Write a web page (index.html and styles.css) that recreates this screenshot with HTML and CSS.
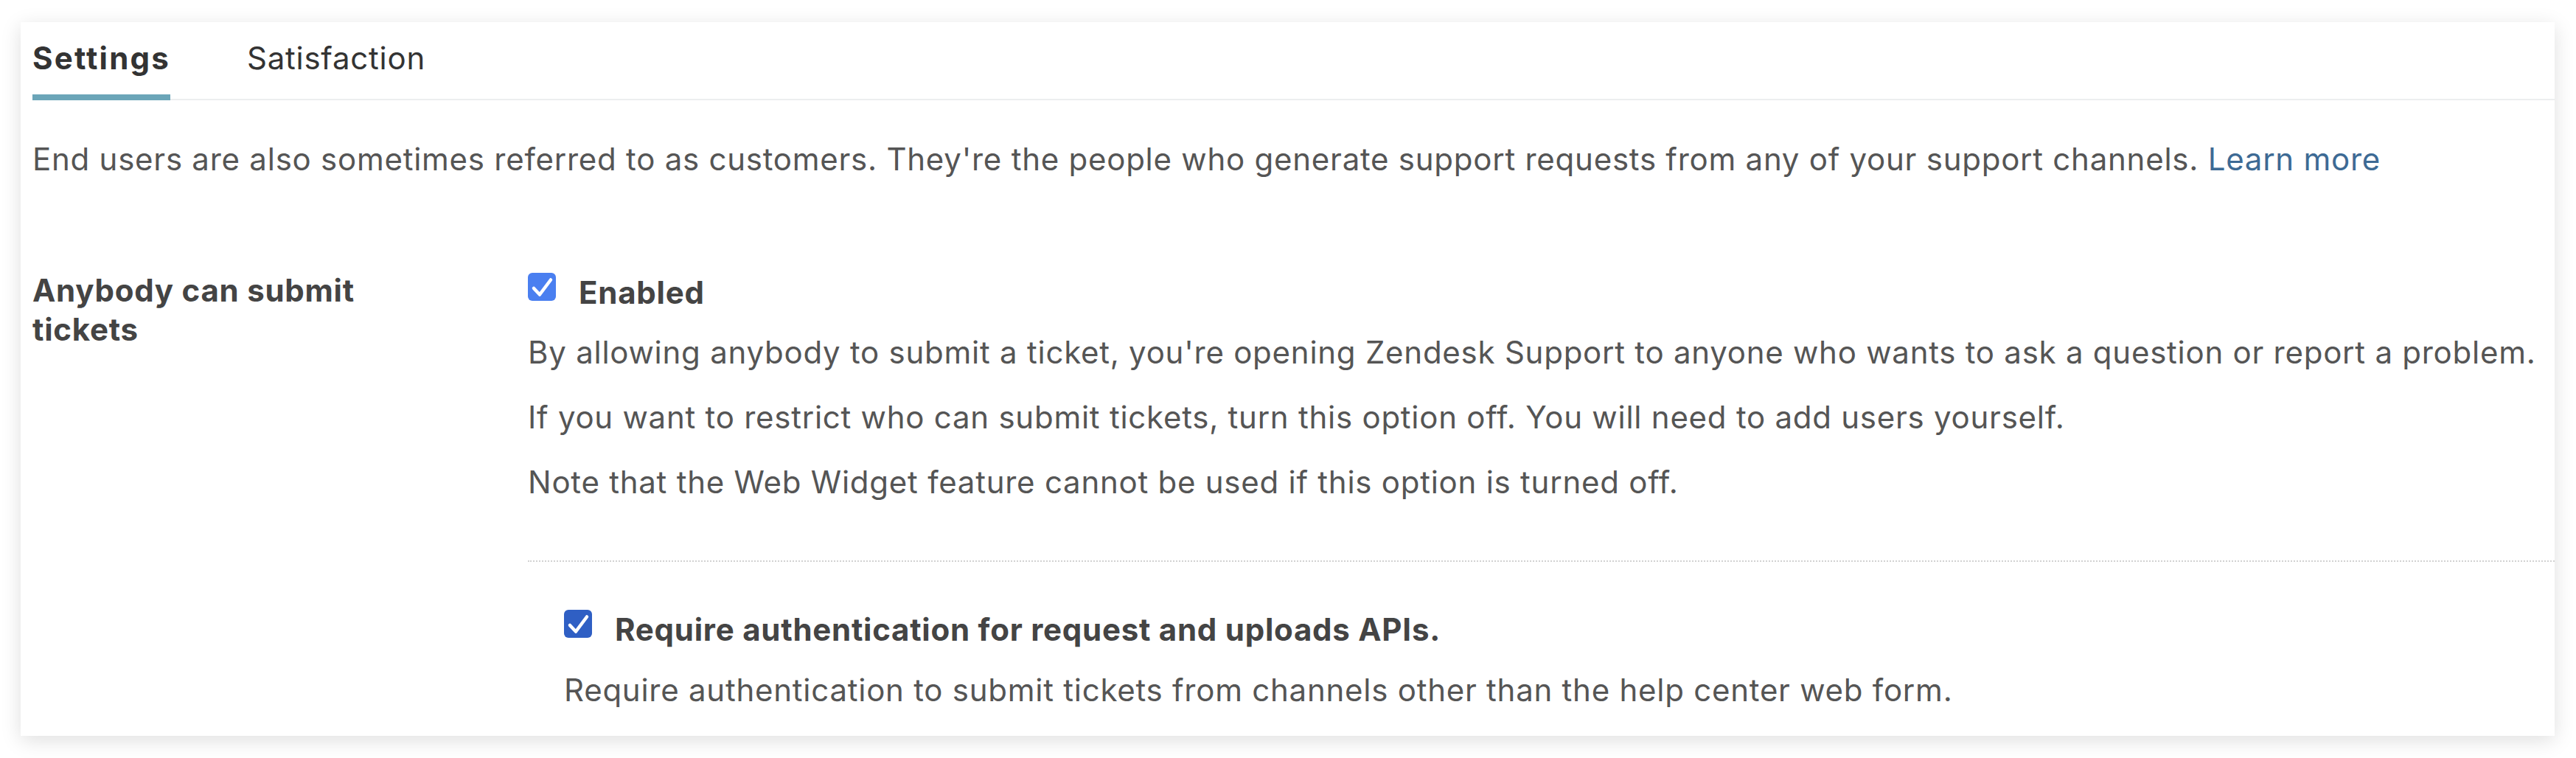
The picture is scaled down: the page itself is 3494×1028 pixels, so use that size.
FILE: index.html
```html
<!DOCTYPE html>
<html lang="en">
<head>
    <meta charset="UTF-8">
    <meta name="viewport" content="width=device-width, initial-scale=1.0">
    <title>End users</title>
    <link rel="stylesheet" href="styles.css">
</head>
<body>
    <div class="panel">
        <div class="tabs">
            <div class="tab active">Settings</div>
            <div class="tab">Satisfaction</div>
        </div>

        <p class="intro">End users are also sometimes referred to as customers. They're the people who generate support requests from any of your support channels. <a href="#">Learn more</a></p>

        <div class="setting">
            <div class="setting-label">Anybody can submit tickets</div>
            <div class="setting-body">
                <label class="check">
                    <span class="box">
                        <svg viewBox="0 0 38 38" width="38" height="38"><polyline points="8,21 16,29.5 31,9.5" fill="none" stroke="#fff" stroke-width="4.5" stroke-linecap="round" stroke-linejoin="round"/></svg>
                    </span>
                    Enabled
                </label>
                <p class="hint">By allowing anybody to submit a ticket, you're opening Zendesk Support to anyone who wants to ask a question or report a problem.</p>
                <p class="hint">If you want to restrict who can submit tickets, turn this option off. You will need to add users yourself.</p>
                <p class="hint">Note that the Web Widget feature cannot be used if this option is turned off.</p>

                <div class="nested">
                    <label class="check">
                        <span class="box dark">
                            <svg viewBox="0 0 38 38" width="38" height="38"><polyline points="8,21 16,29.5 31,9.5" fill="none" stroke="#fff" stroke-width="4.5" stroke-linecap="round" stroke-linejoin="round"/></svg>
                        </span>
                        Require authentication for request and uploads APIs.
                    </label>
                    <p class="hint">Require authentication to submit tickets from channels other than the help center web form.</p>
                </div>
            </div>
        </div>
    </div>
</body>
</html>
```

FILE: styles.css
```css
*{
    box-sizing: border-box;
}
body{
    margin: 0;
    background-color: #fff;
    font-family: Inter, "Liberation Sans", Arial, sans-serif;
    font-size: 42px;
    letter-spacing: 0.75px;
    line-height: 53px;
    color: #555;
}
.panel{
    margin: 30px 29px 30px 28px;
    height: 968px;
    padding: 0 0 0 16px;
    background-color: #fff;
    box-shadow: 0 6px 26px rgba(0, 0, 0, 0.13);
    overflow: hidden;
}
.tabs{
    display: flex;
    gap: 104px;
    padding-top: 22px;
    border-bottom: 2px solid #eceeef;
}
.tab{
    color: #333;
    padding-bottom: 23px;
    border-bottom: 8px solid transparent;
    margin-bottom: -2px;
}
.tab.active{
    font-weight: 700;
    letter-spacing: 2.2px;
    border-bottom-color: #6ba5b8;
}
.intro{
    margin: 53px 0 0 0;
}
.intro a{
    color: #3d6a94;
    text-decoration: none;
}
.setting{
    display: grid;
    grid-template-columns: 672px 1fr;
    margin-top: 125px;
}
.setting-label{
    width: 500px;
    font-weight: 700;
    color: #444;
}
.setting-body{
    padding-top: 3px;
}
.check{
    display: flex;
    align-items: flex-start;
    gap: 31px;
    font-weight: 700;
    color: #444;
    margin-bottom: 28px;
}
.box{
    width: 38px;
    height: 38px;
    border-radius: 6px;
    background-color: #4a7ff0;
    display: flex;
}
.box.dark{
    background-color: #2f5fc4;
}
.hint{
    margin: 0 0 35px 0;
}
.nested{
    margin-top: 80px;
    border-top: 2px dotted #d2d2d2;
    padding: 65px 0 0 49px;
}
.nested .check{
    margin-bottom: 29px;
}
.nested .hint{
    margin: 0;
}
```
